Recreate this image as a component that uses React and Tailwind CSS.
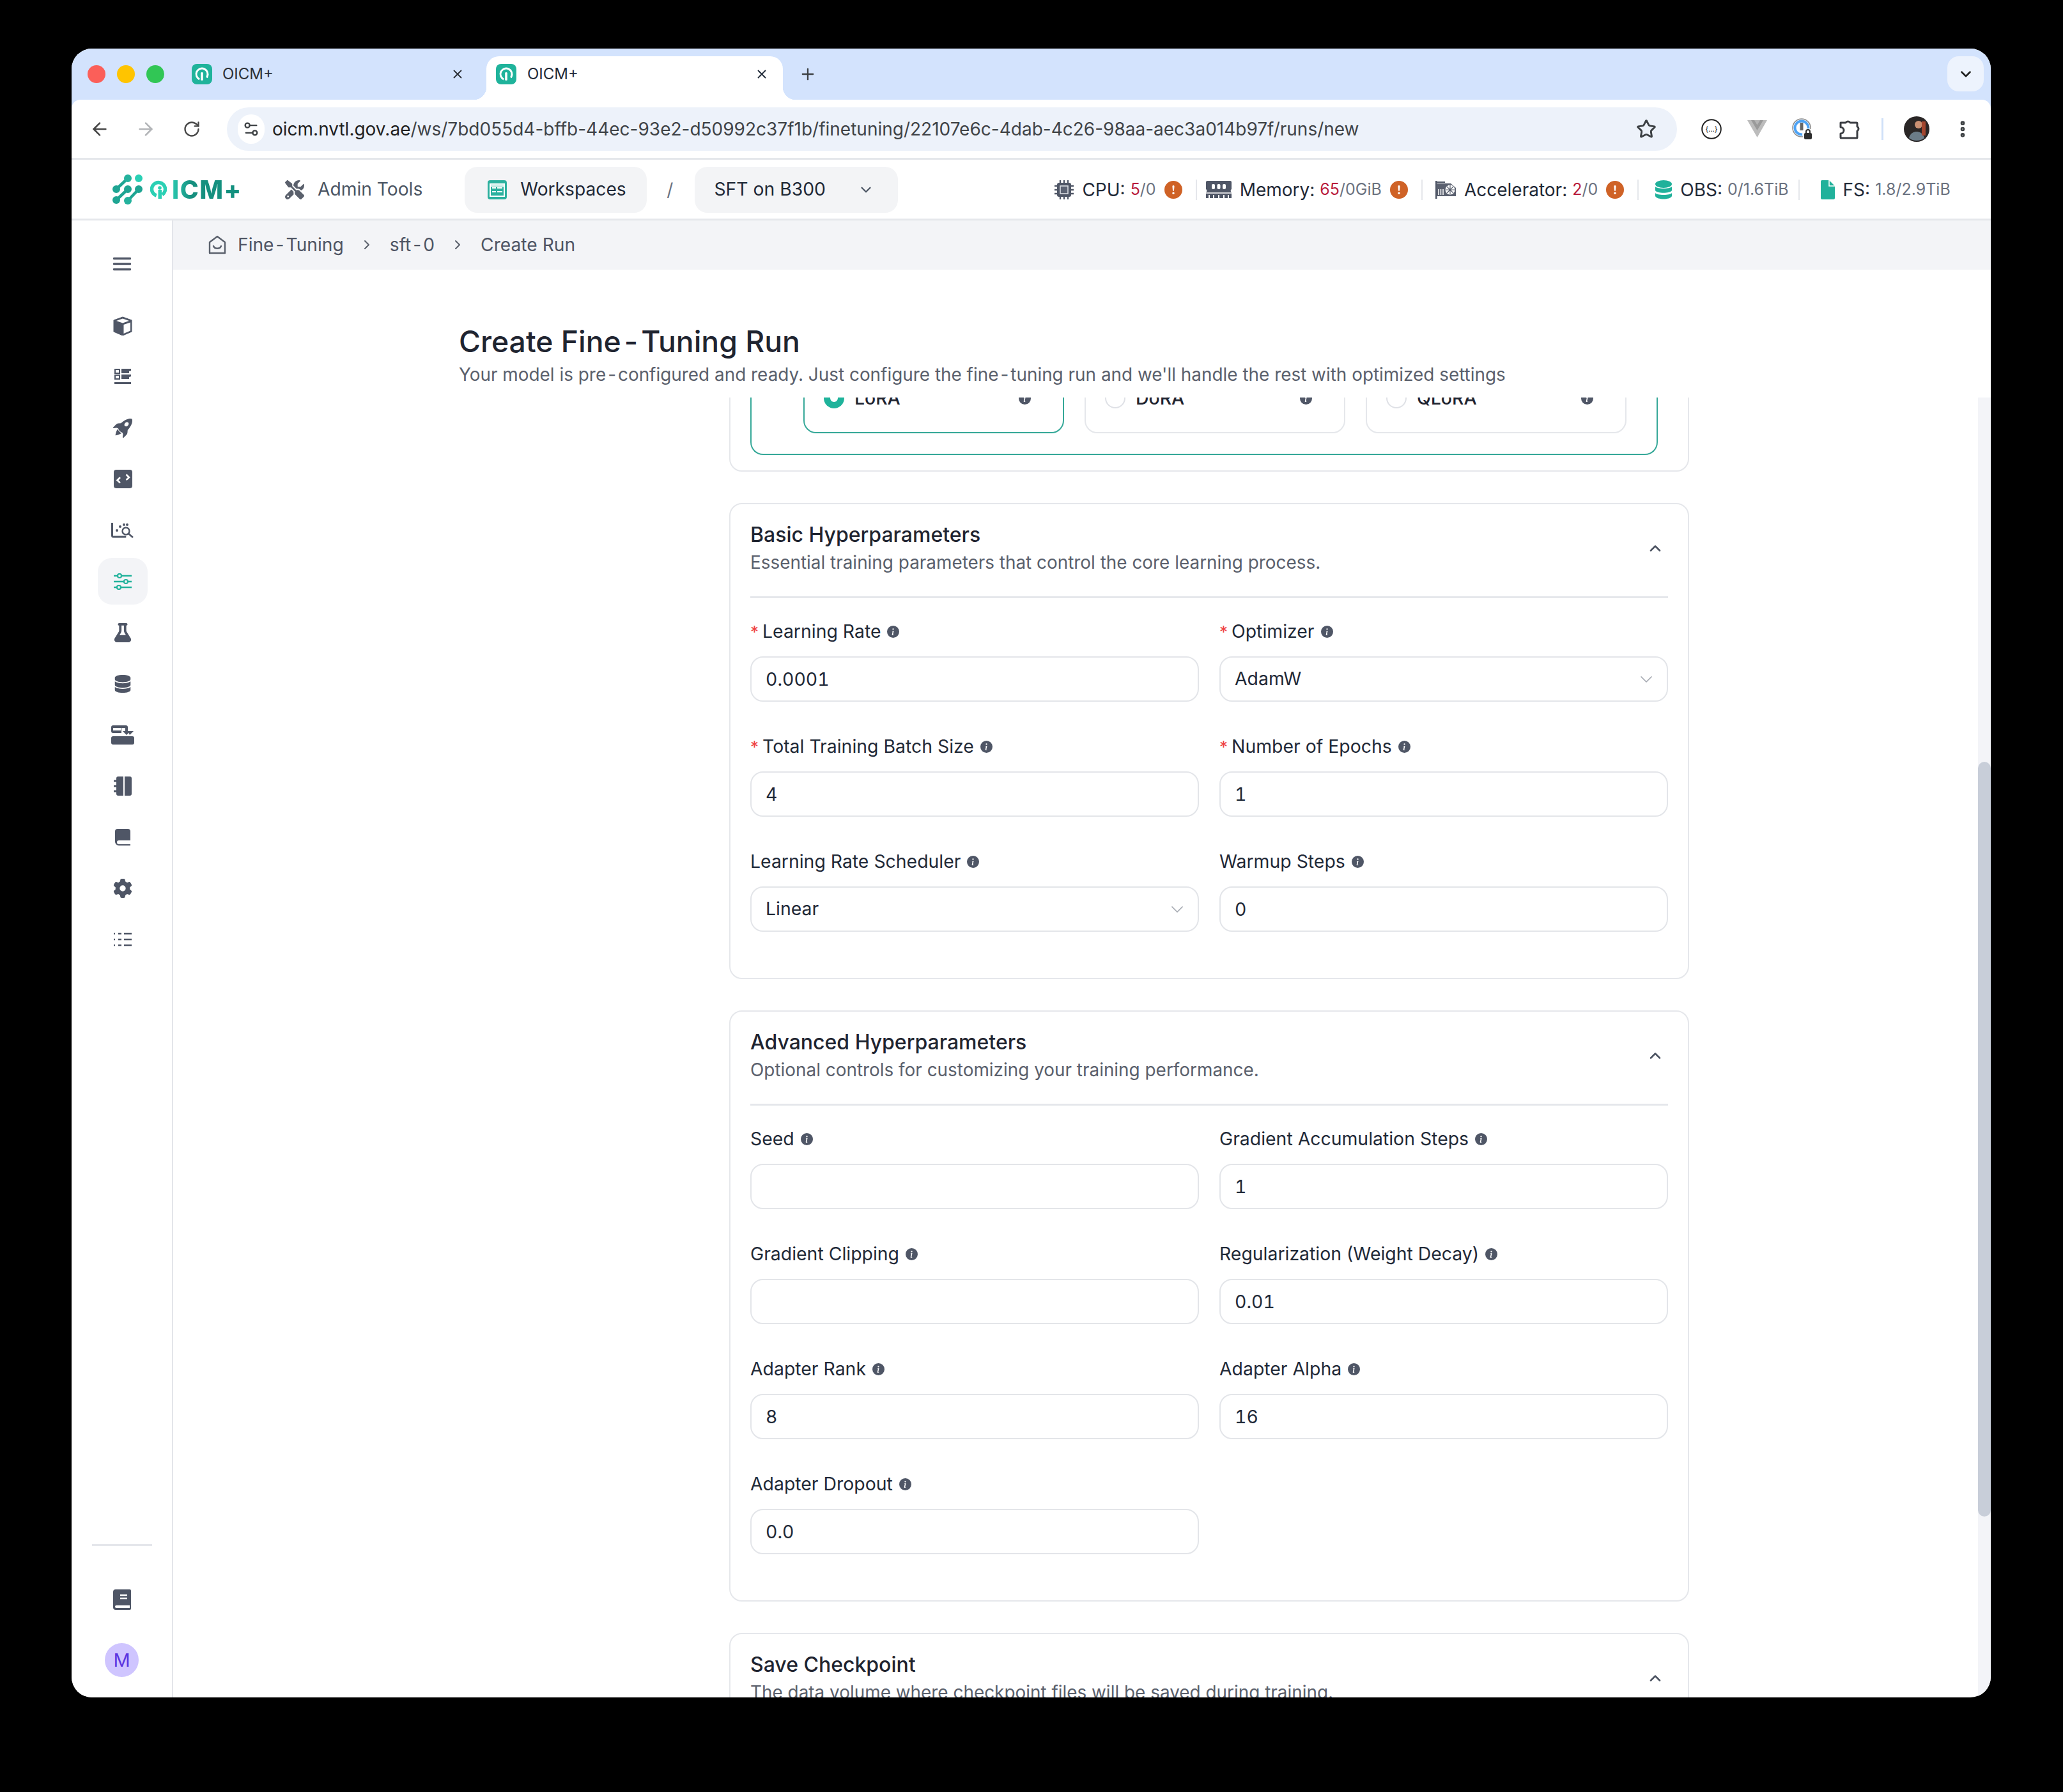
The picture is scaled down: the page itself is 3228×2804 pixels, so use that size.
import React from "react";
import { ArrowLeft, ArrowRight, RotateCw, Star, Settings2, ChevronDown, ChevronUp, ChevronRight, X, Plus, EllipsisVertical } from "lucide-react";
import { BsInfoCircleFill, BsRocketTakeoffFill, BsExclamationCircleFill } from "react-icons/bs";
import { FaScrewdriverWrench, FaFlask, FaDatabase, FaGear } from "react-icons/fa6";

const basicFields = [
  { label: "Learning Rate", required: true, value: "0.0001" },
  { label: "Optimizer", required: true, value: "AdamW", select: true },
  { label: "Total Training Batch Size", required: true, value: "4" },
  { label: "Number of Epochs", required: true, value: "1" },
  { label: "Learning Rate Scheduler", value: "Linear", select: true },
  { label: "Warmup Steps", value: "0" },
];

const advancedFields = [
  { label: "Seed", value: "" },
  { label: "Gradient Accumulation Steps", value: "1" },
  { label: "Gradient Clipping", value: "" },
  { label: "Regularization (Weight Decay)", value: "0.01" },
  { label: "Adapter Rank", value: "8" },
  { label: "Adapter Alpha", value: "16" },
  { label: "Adapter Dropout", value: "0.0" },
];

// the hyphen in the reference sits wider than Inter's own
function Hy() {
  return <span className="mx-[3px]">-</span>;
}

function Favicon() {
  return (
    <svg width="32" height="32" viewBox="0 0 32 32" className="shrink-0">
      <rect width="32" height="32" rx="8" fill="#1fb39b" />
      <circle cx="16" cy="16" r="9" fill="none" stroke="#fff" strokeWidth="3" strokeDasharray="44 13" transform="rotate(115 16 16)" />
      <rect x="14.2" y="13" width="3.6" height="13" rx="1.5" fill="#fff" />
    </svg>
  );
}

function Logo() {
  return (
    <div className="flex items-center w-[201px] shrink-0">
      <svg width="47" height="47" viewBox="0 0 47 47" className="shrink-0">
        <g stroke="#1fa593" strokeWidth="4.5" fill="none">
          <path d="M6 23 24 6" />
          <path d="M6 40 24 23" />
          <path d="M24 41 41 23" />
        </g>
        <circle cx="24" cy="6" r="6" fill="#25b29d" />
        <circle cx="41" cy="6" r="6" fill="#2ad0b5" />
        <circle cx="6" cy="23" r="6" fill="#1fa593" />
        <circle cx="24" cy="23" r="6" fill="#1fa593" />
        <circle cx="41" cy="23" r="6" fill="#1fa593" />
        <circle cx="6" cy="40" r="6" fill="#1fa593" />
        <circle cx="24" cy="41" r="6" fill="#25b29d" />
      </svg>
      <svg width="26" height="29" viewBox="0 0 26 29" className="ml-[12px] shrink-0">
        <circle cx="13" cy="14" r="10.5" fill="none" stroke="#2bd0b4" strokeWidth="5.5" strokeDasharray="56 10" transform="rotate(108 13 14)" />
        <circle cx="15" cy="12" r="2.8" fill="#2bd0b4" />
        <rect x="12.5" y="15" width="5.5" height="14" fill="#2bd0b4" />
      </svg>
      <span className="ml-[8px] text-[39px] leading-none font-extrabold tracking-[1.5px] text-transparent bg-clip-text bg-[linear-gradient(90deg,#2bc9b0,#168f7f_28%,#13917f)]">ICM+</span>
    </div>
  );
}

function Workspace() {
  return (
    <svg width="30" height="30" viewBox="0 0 30 30" className="shrink-0">
      <rect width="30" height="30" rx="4" fill="#2bb09e" />
      <rect x="4" y="6" width="22" height="19" fill="none" stroke="#fff" strokeWidth="2" />
      <path d="M7 12h6M7 18h6M15 12h8M15 18h8M4 9h22" stroke="#fff" strokeWidth="2" />
    </svg>
  );
}

function Warn() {
  return <BsExclamationCircleFill size={28} className="text-[#cf6226] shrink-0" />;
}

function Sep() {
  return <div className="w-[2px] h-[32px] bg-[#e5e7eb] shrink-0" />;
}

function Metric({ icon, name, used, rest, warn, className }) {
  return (
    <div className={`flex items-center shrink-0 ${className}`}>
      {icon}
      <span className="text-[28px] text-[#1f2937] ml-[13px]">{name}</span>
      <span className="text-[25px] text-[#6b7280] ml-[8px]">
        <span className="text-[#b91c3c]">{used}</span>
        {rest}
      </span>
      {warn && <div className="ml-[13px] flex"><Warn /></div>}
    </div>
  );
}

function CpuIcon() {
  return (
    <svg width="30" height="30" viewBox="0 0 30 30" className="shrink-0">
      <path d="M9 0v30M15 0v30M21 0v30M0 9h30M0 15h30M0 21h30" stroke="#4f5666" strokeWidth="2.4" />
      <rect x="4" y="4" width="22" height="22" rx="3" fill="#4f5666" />
      <rect x="9" y="9" width="12" height="12" fill="#5b6272" stroke="#d9dce2" strokeWidth="1.6" />
    </svg>
  );
}

function MemoryIcon() {
  return (
    <svg width="40" height="28" viewBox="0 0 40 28" className="shrink-0">
      <path d="M2 0h36a2 2 0 0 1 2 2v11a3 3 0 0 0 0 5v9H0v-9a3 3 0 0 0 0-5V2a2 2 0 0 1 2-2z" fill="#4f5666" />
      <rect x="9" y="5" width="5" height="8" rx="2" fill="#fff" />
      <rect x="17.5" y="5" width="5" height="8" rx="2" fill="#fff" />
      <rect x="26" y="5" width="5" height="8" rx="2" fill="#fff" />
      <path d="M0 19h40" stroke="#fff" strokeWidth="1.5" />
      <path d="M5 22v6M12 22v6M20 22v6M28 22v6M35 22v6" stroke="#fff" strokeWidth="2" />
    </svg>
  );
}

function GpuIcon() {
  return (
    <svg width="32" height="28" viewBox="0 0 32 28" className="shrink-0">
      <path d="M0 0h2.5v28H0zM2 1h13v2H2z" fill="#4f5666" />
      <path d="M2 4h22l8 7v13H2z" fill="#5a606f" />
      <circle cx="23" cy="14" r="7.5" fill="#fff" />
      <path d="M23 7v14M16 14h14M18 9l10 10M28 9 18 19" stroke="#5a606f" strokeWidth="1.2" />
      <circle cx="23" cy="14" r="1.6" fill="#5a606f" />
      <path d="M5 13v9M8.5 13v9M12 13v9" stroke="#fff" strokeWidth="1.5" />
    </svg>
  );
}

function ObsIcon() {
  return (
    <svg width="26" height="30" viewBox="0 0 26 30" className="shrink-0">
      <ellipse cx="13" cy="6" rx="13" ry="6" fill="#21b19b" />
      <path d="M0 10c3 4 23 4 26 0v6c-3 5-23 5-26 0z" fill="#21b19b" />
      <path d="M0 20c3 4 23 4 26 0v5c-3 6-23 6-26 0z" fill="#21b19b" />
    </svg>
  );
}

function FileIcon() {
  return (
    <svg width="22" height="30" viewBox="0 0 22 30" className="shrink-0">
      <path d="M2 0h11l9 9v19a2 2 0 0 1-2 2H2a2 2 0 0 1-2-2V2a2 2 0 0 1 2-2z" fill="#21b19b" />
      <path d="M13 0v9h9" fill="none" stroke="#fff" strokeWidth="1.5" />
    </svg>
  );
}

function TabStrip() {
  return (
    <div className="h-[80px] bg-[#d3e3fd] flex shrink-0 relative">
      <div className="flex items-center gap-[18px] pl-[25px] h-[80px]">
        <div className="w-[28px] h-[28px] rounded-full bg-[#fb5f59]" />
        <div className="w-[28px] h-[28px] rounded-full bg-[#ffc400]" />
        <div className="w-[28px] h-[28px] rounded-full bg-[#31c655]" />
      </div>
      <div className="w-[504px] pl-[43px] pr-[34px] flex items-center text-[#2b2f36] text-[24px]">
        <Favicon />
        <span className="ml-[16px]">OICM+</span>
        <X size={22} className="ml-auto" />
      </div>
      <div className="relative w-[464px] mt-[12px] bg-white rounded-t-[20px] pl-[15px] pr-[22px] pb-[12px] flex items-center text-[#1f2937] text-[24px]">
        <Favicon />
        <span className="ml-[17px]">OICM+</span>
        <X size={22} className="ml-auto" />
        <div className="absolute left-[-20px] bottom-0 w-[20px] h-[20px] bg-[radial-gradient(circle_at_0_0,#d3e3fd_20px,#fff_20.5px)]" />
        <div className="absolute right-[-20px] bottom-0 w-[20px] h-[20px] bg-[radial-gradient(circle_at_100%_0,#d3e3fd_20px,#fff_20.5px)]" />
      </div>
      <Plus size={28} className="text-[#3c4043] ml-[25px] self-center" />
      <div className="ml-auto mr-[11px] mt-[12px] w-[57px] h-[55px] rounded-[18px] bg-[#edf3fd] flex items-center justify-center">
        <ChevronDown size={26} strokeWidth={2.5} className="text-[#1f1f1f]" />
      </div>
    </div>
  );
}

function Toolbar() {
  return (
    <div className="h-[94px] bg-[#d3e3fd] shrink-0">
      <div className="h-[94px] bg-white rounded-t-[14px] border-b-[3px] border-[#e5e7eb] flex items-center">
        <ArrowLeft size={32} className="ml-[28px] text-[#474747] shrink-0" />
        <ArrowRight size={32} className="ml-[40px] text-[#b3b5b8] shrink-0" />
        <RotateCw size={28} className="ml-[42px] text-[#474747] shrink-0" />
        <div className="ml-[41px] w-[2269px] h-[68px] rounded-full bg-[#edf2fa] flex items-center pl-[17px] pr-[32px] shrink-0">
          <div className="w-[42px] h-[46px] rounded-full bg-white flex items-center justify-center">
            <Settings2 size={28} className="text-[#3c4043]" />
          </div>
          <span className="ml-[12px] text-[28px] text-[#1f1f1f] whitespace-nowrap pt-[1px]">
            oicm.nvtl.gov.ae<span className="text-[#3f4347]">/ws/7bd055d4-bffb-44ec-93e2-d50992c37f1b/finetuning/22107e6c-4dab-4c26-98aa-aec3a014b97f/runs/new</span>
          </span>
          <Star size={32} strokeWidth={2.2} className="ml-auto text-[#3c4043] shrink-0" />
        </div>
        <svg width="32" height="32" viewBox="0 0 32 32" className="ml-[38px] shrink-0">
          <circle cx="16" cy="16" r="14.8" fill="none" stroke="#222" strokeWidth="2" />
          <text x="16" y="20" textAnchor="middle" fontSize="11" fill="#222">{"{...}"}</text>
        </svg>
        <svg width="31" height="27" viewBox="0 0 31 27" className="ml-[40px] shrink-0">
          <path d="M0 0h31L15.5 27z" fill="#bcbcbc" />
          <path d="M6 0h19L15.5 16z" fill="#9a9a9a" />
          <path d="M11 0h9l-4.500 7.500z" fill="#b5b5b5" />
        </svg>
        <svg width="34" height="34" viewBox="0 0 34 34" className="ml-[39px] shrink-0">
          <circle cx="15" cy="15" r="14" fill="none" stroke="#8f8f8f" strokeWidth="1.6" />
          <circle cx="15" cy="15" r="10.5" fill="none" stroke="#4ea3f5" strokeWidth="4" />
          <rect x="12.500" y="7" width="5" height="12" fill="#666" />
          <circle cx="25" cy="25" r="9" fill="#fff" />
          <rect x="19" y="23" width="12" height="10" rx="2" fill="#2d2d2d" />
          <path d="M22 23v-2a3 3 0 0 1 6 0v2" fill="none" stroke="#2d2d2d" strokeWidth="2" />
        </svg>
        <svg width="34" height="32" viewBox="0 0 34 32" className="ml-[40px] shrink-0">
          <path d="M2 6h8a4 4 0 0 1 7 0h10a1 1 0 0 1 1 1v5a4 4 0 0 1 0 7v10a1 1 0 0 1-1 1H3a1 1 0 0 1-1-1v-6a5 5 0 0 0 0-10z" fill="#fff" stroke="#3a3d42" strokeWidth="3" strokeLinejoin="round" />
        </svg>
        <div className="ml-[32px] w-[3px] h-[34px] bg-[#cfe0f8] shrink-0" />
        <svg width="40" height="40" viewBox="0 0 40 40" className="ml-[32px] shrink-0">
          <circle cx="20" cy="20" r="20" fill="#2a2626" />
          <path d="M8 34c2-8 8-10 12-10s10 2 12 10a20 20 0 0 1-24 0z" fill="#6b7c88" />
          <circle cx="23" cy="13" r="6" fill="#c98f72" />
          <path d="M28 8h6v22h-6z" fill="#a3462f" />
        </svg>
        <EllipsisVertical size={32} strokeWidth={3} className="ml-[36px] text-[#3c4043] shrink-0" />
      </div>
    </div>
  );
}

function AppHeader() {
  return (
    <div className="h-[95px] bg-white border-b-[3px] border-[#e5e7eb] flex items-center shrink-0 pl-[64px] pt-[1px]">
      <Logo />
      <FaScrewdriverWrench size={30} className="ml-[69px] text-[#5a606c] shrink-0" />
      <span className="ml-[21px] text-[28.2px] text-[#4b5563]">Admin Tools</span>
      <div className="ml-[66px] w-[285px] h-[72px] rounded-[20px] bg-[#f3f4f6] flex items-center pl-[36px] shrink-0">
        <Workspace />
        <span className="ml-[21px] text-[28.2px] text-[#1f2937]">Workspaces</span>
      </div>
      <span className="ml-[31px] text-[28px] text-[#6b7280]">/</span>
      <div className="ml-[34px] w-[318px] h-[72px] rounded-[20px] bg-[#f3f4f6] flex items-center pl-[30px] pr-[37px] shrink-0">
        <span className="text-[28.3px] text-[#1f2937]">SFT on B300</span>
        <ChevronDown size={26} className="ml-auto text-[#4b5563]" />
      </div>
      <Metric className="ml-[245px]" icon={<CpuIcon />} name="CPU:" used="5" rest="/0" warn />
      <div className="ml-[21px]"><Sep /></div>
      <Metric className="ml-[14px]" icon={<MemoryIcon />} name="Memory:" used="65" rest="/0GiB" warn />
      <div className="ml-[21px]"><Sep /></div>
      <Metric className="ml-[20px]" icon={<GpuIcon />} name="Accelerator:" used="2" rest="/0" warn />
      <div className="ml-[21px]"><Sep /></div>
      <Metric className="ml-[26px]" icon={<ObsIcon />} name="OBS:" rest="0/1.6TiB" />
      <div className="ml-[15px]"><Sep /></div>
      <Metric className="ml-[33px]" icon={<FileIcon />} name="FS:" rest="1.8/2.9TiB" />
    </div>
  );
}

function SideIcon({ children, active }) {
  return (
    <div className={`w-[78px] h-[73px] mb-[7px] rounded-[22px] flex items-center justify-center text-[#4f5666] ${active ? "bg-[#f3f4f7]" : ""}`}>
      {children}
    </div>
  );
}

function Sidebar() {
  return (
    <div className="w-[159px] shrink-0 border-r-[2px] border-[#e3e5ea] bg-white flex flex-col items-center pt-[57px] pb-[32px]">
      <svg width="28" height="22" viewBox="0 0 28 22" className="mb-[51px]">
        <path d="M1.5 2.500h25M1.500 11h25M1.500 19.500h25" stroke="#4f5666" strokeWidth="3.4" strokeLinecap="round" />
      </svg>
      <div className="flex flex-col items-center pl-[3px] -mt-[2px]">
        <SideIcon>
          <svg width="30" height="30" viewBox="0 0 30 30">
            <path d="M15 1 29 6v18l-14 6-14-6V6z" fill="#4f5666" stroke="#4f5666" strokeWidth="1" strokeLinejoin="round" />
            <path d="M15 3.500 25 7l-10 3.500L5 7z" fill="#fff" />
            <path d="M16.500 13 27 9.500v13L16.500 27z" fill="#fff" />
          </svg>
        </SideIcon>
        <SideIcon>
          <svg width="26" height="25" viewBox="0 0 26 25">
            <rect x="1" y="1" width="7" height="6" fill="none" stroke="#4f5666" strokeWidth="2" />
            <rect x="1" y="10" width="7" height="6" fill="none" stroke="#4f5666" strokeWidth="2" />
            <path d="M11 0h15v3l-3 1v3H11zM11 9h15v3l-3 1v3H11z" fill="#4f5666" />
            <path d="M0 22.500h26" stroke="#4f5666" strokeWidth="3" />
          </svg>
        </SideIcon>
        <SideIcon>
          <BsRocketTakeoffFill size={30} />
        </SideIcon>
        <SideIcon>
          <svg width="29" height="29" viewBox="0 0 29 29">
            <rect width="29" height="29" rx="4" fill="#4f5666" />
            <path d="M10 12 5.500 16.500l4.500 4M19.500 7.500l4.500 4.500-4.500 4" fill="none" stroke="#fff" strokeWidth="2.6" />
          </svg>
        </SideIcon>
        <SideIcon>
          <svg width="36" height="24" viewBox="0 0 36 24">
            <path d="M1.500 0v20a2 2 0 0 0 2 2H22" fill="none" stroke="#4f5666" strokeWidth="3" strokeLinecap="round" />
            <circle cx="9" cy="12" r="2" fill="#4f5666" />
            <circle cx="14" cy="6" r="2" fill="#4f5666" />
            <circle cx="20" cy="3" r="2" fill="#4f5666" />
            <circle cx="25" cy="3" r="2" fill="#4f5666" />
            <circle cx="23" cy="13" r="5.500" fill="none" stroke="#4f5666" strokeWidth="2.4" />
            <path d="M27 17l7 6" stroke="#4f5666" strokeWidth="2.6" />
          </svg>
        </SideIcon>
        <SideIcon active>
          <svg width="30" height="26" viewBox="0 0 30 26">
            <path d="M1 4h28M1 13h28M1 22h28" stroke="#23b39c" strokeWidth="2.4" />
            <circle cx="10" cy="4" r="3" fill="#f3f4f7" stroke="#23b39c" strokeWidth="2.2" />
            <circle cx="20" cy="13" r="3" fill="#f3f4f7" stroke="#23b39c" strokeWidth="2.2" />
            <circle cx="9" cy="22" r="3" fill="#f3f4f7" stroke="#23b39c" strokeWidth="2.2" />
          </svg>
        </SideIcon>
        <SideIcon>
          <FaFlask size={30} />
        </SideIcon>
        <SideIcon>
          <FaDatabase size={28} />
        </SideIcon>
        <SideIcon>
          <svg width="36" height="30" viewBox="0 0 36 30">
            <rect x="0" y="17" width="36" height="13" rx="3" fill="#4f5666" />
            <path d="M3 0h20a3 3 0 0 1 3 3v6h4l-6 6-6-6h4V4H16v8H3a3 3 0 0 1-3-3V3a3 3 0 0 1 3-3zM3 4v4h12V4z" fill="#4f5666" fillRule="evenodd" />
            <path d="M26 9h9l-6 6z" fill="#4f5666" />
          </svg>
        </SideIcon>
        <SideIcon>
          <svg width="28" height="30" viewBox="0 0 28 30">
            <path d="M7 0h8v30H7a3 3 0 0 1-3-3V3a3 3 0 0 1 3-3zM17 0h8a3 3 0 0 1 3 3v24a3 3 0 0 1-3 3h-8z" fill="#4f5666" />
            <path d="M0 7h5M0 15h5M0 23h5" stroke="#4f5666" strokeWidth="3" strokeLinecap="round" />
          </svg>
        </SideIcon>
        <SideIcon>
          <svg width="26" height="26" viewBox="0 0 26 26">
            <path d="M5 0h16a4 4 0 0 1 4 4v14H7a3 3 0 0 0 0 6h18v2H7a6 6 0 0 1-6-6V4a4 4 0 0 1 4-4z" fill="#4f5666" />
            <path d="M7 19.500h18v3H7a1.500 1.500 0 0 1 0-3z" fill="#fff" />
          </svg>
        </SideIcon>
        <SideIcon>
          <FaGear size={30} />
        </SideIcon>
        <SideIcon>
          <svg width="28" height="24" viewBox="0 0 28 24">
            <path d="M0 3h2M7 3h5M16 3h12M0 12h2M7 12h5M16 12h12M0 21h2M7 21h5M16 21h12" stroke="#4f5666" strokeWidth="2.6" />
          </svg>
        </SideIcon>
      </div>
      <div className="mt-auto w-[94px] h-[3px] bg-[#e5e7eb]" />
      <svg width="28" height="32" viewBox="0 0 28 32" className="mt-[68px]">
        <path d="M4 0h22a2 2 0 0 1 2 2v28a2 2 0 0 1-2 2H4a4 4 0 0 1-4-4V4a4 4 0 0 1 4-4z" fill="#4f5666" />
        <path d="M11 9h11M11 14h11" stroke="#fff" strokeWidth="2.4" />
        <path d="M5 25h21v4H5a2 2 0 0 1 0-4z" fill="#fff" />
      </svg>
      <div className="mt-[52px] w-[53px] h-[53px] rounded-full bg-[#cfc5ff] flex items-center justify-center text-[#5b34e0] text-[29px]">M</div>
    </div>
  );
}

function Breadcrumb() {
  return (
    <div className="h-[77px] bg-[#f3f4f7] flex items-center pl-[55px] text-[28.2px] text-[#4f5564] shrink-0 pb-[1px]">
      <svg width="28" height="30" viewBox="0 0 28 30" className="shrink-0">
        <path d="M14 2 2 11v17h24V11z" fill="none" stroke="#5a606c" strokeWidth="2.4" strokeLinejoin="round" />
        <path d="M8 17c2 5 10 5 12 0" fill="none" stroke="#5a606c" strokeWidth="2.4" strokeLinecap="round" />
      </svg>
      <span className="ml-[18px]">Fine<Hy />Tuning</span>
      <ChevronRight size={24} className="ml-[24px] text-[#5a606c]" />
      <span className="ml-[24px]">sft<Hy />0</span>
      <ChevronRight size={24} className="ml-[24px] text-[#5a606c]" />
      <span className="ml-[24px]">Create Run</span>
    </div>
  );
}

function Info() {
  return <BsInfoCircleFill size={19} className="text-[#4f5666] shrink-0" />;
}

function Field({ label, required, value, select }) {
  return (
    <div>
      <div className="h-[40px] mb-[19px] flex items-center text-[28.4px] text-[#1f2937]">
        {required && <span className="text-[#ef4444] text-[26px] mr-[6px]">*</span>}
        <span>{label}</span>
        <span className="ml-[10px] flex"><Info /></span>
      </div>
      {select ? (
        <div className="h-[71px] border-2 border-[#e3e5e9] rounded-[20px] bg-white flex items-center pl-[22px] pr-[16px] text-[28.4px] text-[#1f2937]">
          {value}
          <ChevronDown size={32} strokeWidth={1.3} className="ml-auto text-[#a5a9b1]" />
        </div>
      ) : (
        <input
          readOnly
          value={value}
          className="block w-full h-[71px] border-2 border-[#e3e5e9] rounded-[20px] bg-white px-[22px] text-[28.4px] tabular-nums text-[#1f2937] outline-none"
        />
      )}
    </div>
  );
}

function SectionHeader({ title, desc, divider }) {
  return (
    <div className={`relative h-[147px] pt-[26px] ${divider ? "border-b-[3px] border-[#e5e7eb]" : ""}`}>
      <div className="h-[44px] flex items-center text-[32px] font-medium text-[#1f2430]">{title}</div>
      <div className="h-[44px] flex items-center text-[27.9px] text-[#5a606c]">{desc}</div>
      <ChevronUp size={28} strokeWidth={2.2} className="absolute right-[6px] top-[55px] text-[#4b5261]" />
    </div>
  );
}

function Section({ title, desc, fields }) {
  return (
    <div className="border-2 border-[#e5e7eb] rounded-[20px] bg-white px-[31px] pb-[72px] mb-[49px]">
      <SectionHeader title={title} desc={desc} divider />
      <div className="grid grid-cols-2 gap-x-[32px] gap-y-[50px] mt-[32px]">
        {fields.map((f) => (
          <Field key={f.label} {...f} />
        ))}
      </div>
    </div>
  );
}

function AdapterOption({ name, selected }) {
  return (
    <div className={`w-[408px] h-[110px] rounded-[20px] border-2 flex items-center pl-[30px] pr-[50px] ${selected ? "border-[#35a898]" : "border-[#e5e7eb]"}`}>
      {selected ? (
        <div className="w-[32px] h-[32px] rounded-full bg-[#1fb39b] flex items-center justify-center">
          <div className="w-[12px] h-[12px] rounded-full bg-white" />
        </div>
      ) : (
        <div className="w-[32px] h-[32px] rounded-full border-2 border-[#dfe1e6] bg-white" />
      )}
      <span className="ml-[16px] text-[28.4px] font-medium text-[#1f2430]">{name}</span>
      <span className="ml-auto flex"><Info /></span>
    </div>
  );
}

function Content() {
  return (
    <div className="flex-1 min-h-0 flex">
      <div className="flex-1 overflow-hidden pl-[870px]">
        {/* the form is scrolled: the top of the first card sits above the visible area */}
        <div className="w-[1502px] -mt-[184px]">
          <div className="h-[300px] border-2 border-[#e5e7eb] rounded-[20px] bg-white px-[31px] mb-[49px] flex flex-col justify-end pb-[24px]">
            <div className="w-[1420px] h-[200px] border-2 border-t-0 border-[#35a898] rounded-b-[20px] flex items-end gap-[32px] pl-[81px] pb-[32px]">
              <AdapterOption name="LoRA" selected />
              <AdapterOption name="DoRA" />
              <AdapterOption name="QLoRA" />
            </div>
          </div>
          <Section
            title="Basic Hyperparameters"
            desc="Essential training parameters that control the core learning process."
            fields={basicFields}
          />
          <Section
            title="Advanced Hyperparameters"
            desc="Optional controls for customizing your training performance."
            fields={advancedFields}
          />
          <div className="border-2 border-[#e5e7eb] rounded-[20px] bg-white px-[31px] h-[300px]">
            <SectionHeader title="Save Checkpoint" desc="The data volume where checkpoint files will be saved during training." />
          </div>
        </div>
      </div>
      <div className="w-[20px] shrink-0 bg-[#f3f4f8] pt-[570px]">
        <div className="h-[1181px] rounded-full bg-[#c8ced9]" />
      </div>
    </div>
  );
}

export default function App() {
  return (
    <div className="w-[3228px] h-[2804px] bg-black pt-[76px] pl-[112px] font-['Inter',sans-serif]">
      <div className="w-[3003px] h-[2580px] rounded-[32px] overflow-hidden bg-white flex flex-col">
        <TabStrip />
        <Toolbar />
        <AppHeader />
        <div className="flex-1 min-h-0 flex">
          <Sidebar />
          <div className="flex-1 min-w-0 flex flex-col">
            <Breadcrumb />
            <div className="h-[200px] shrink-0 pl-[447px] pt-[90px]">
              <h1 className="text-[46.3px] leading-[44px] font-medium text-[#1f2430]">Create Fine<span className="mx-[5px]">-</span>Tuning Run</h1>
              <p className="mt-[12px] text-[27.9px] leading-[36px] text-[#5a606c]">
                Your model is pre<Hy />configured and ready. Just configure the fine<Hy />tuning run and we'll handle the rest with optimized settings
              </p>
            </div>
            <Content />
          </div>
        </div>
      </div>
    </div>
  );
}
